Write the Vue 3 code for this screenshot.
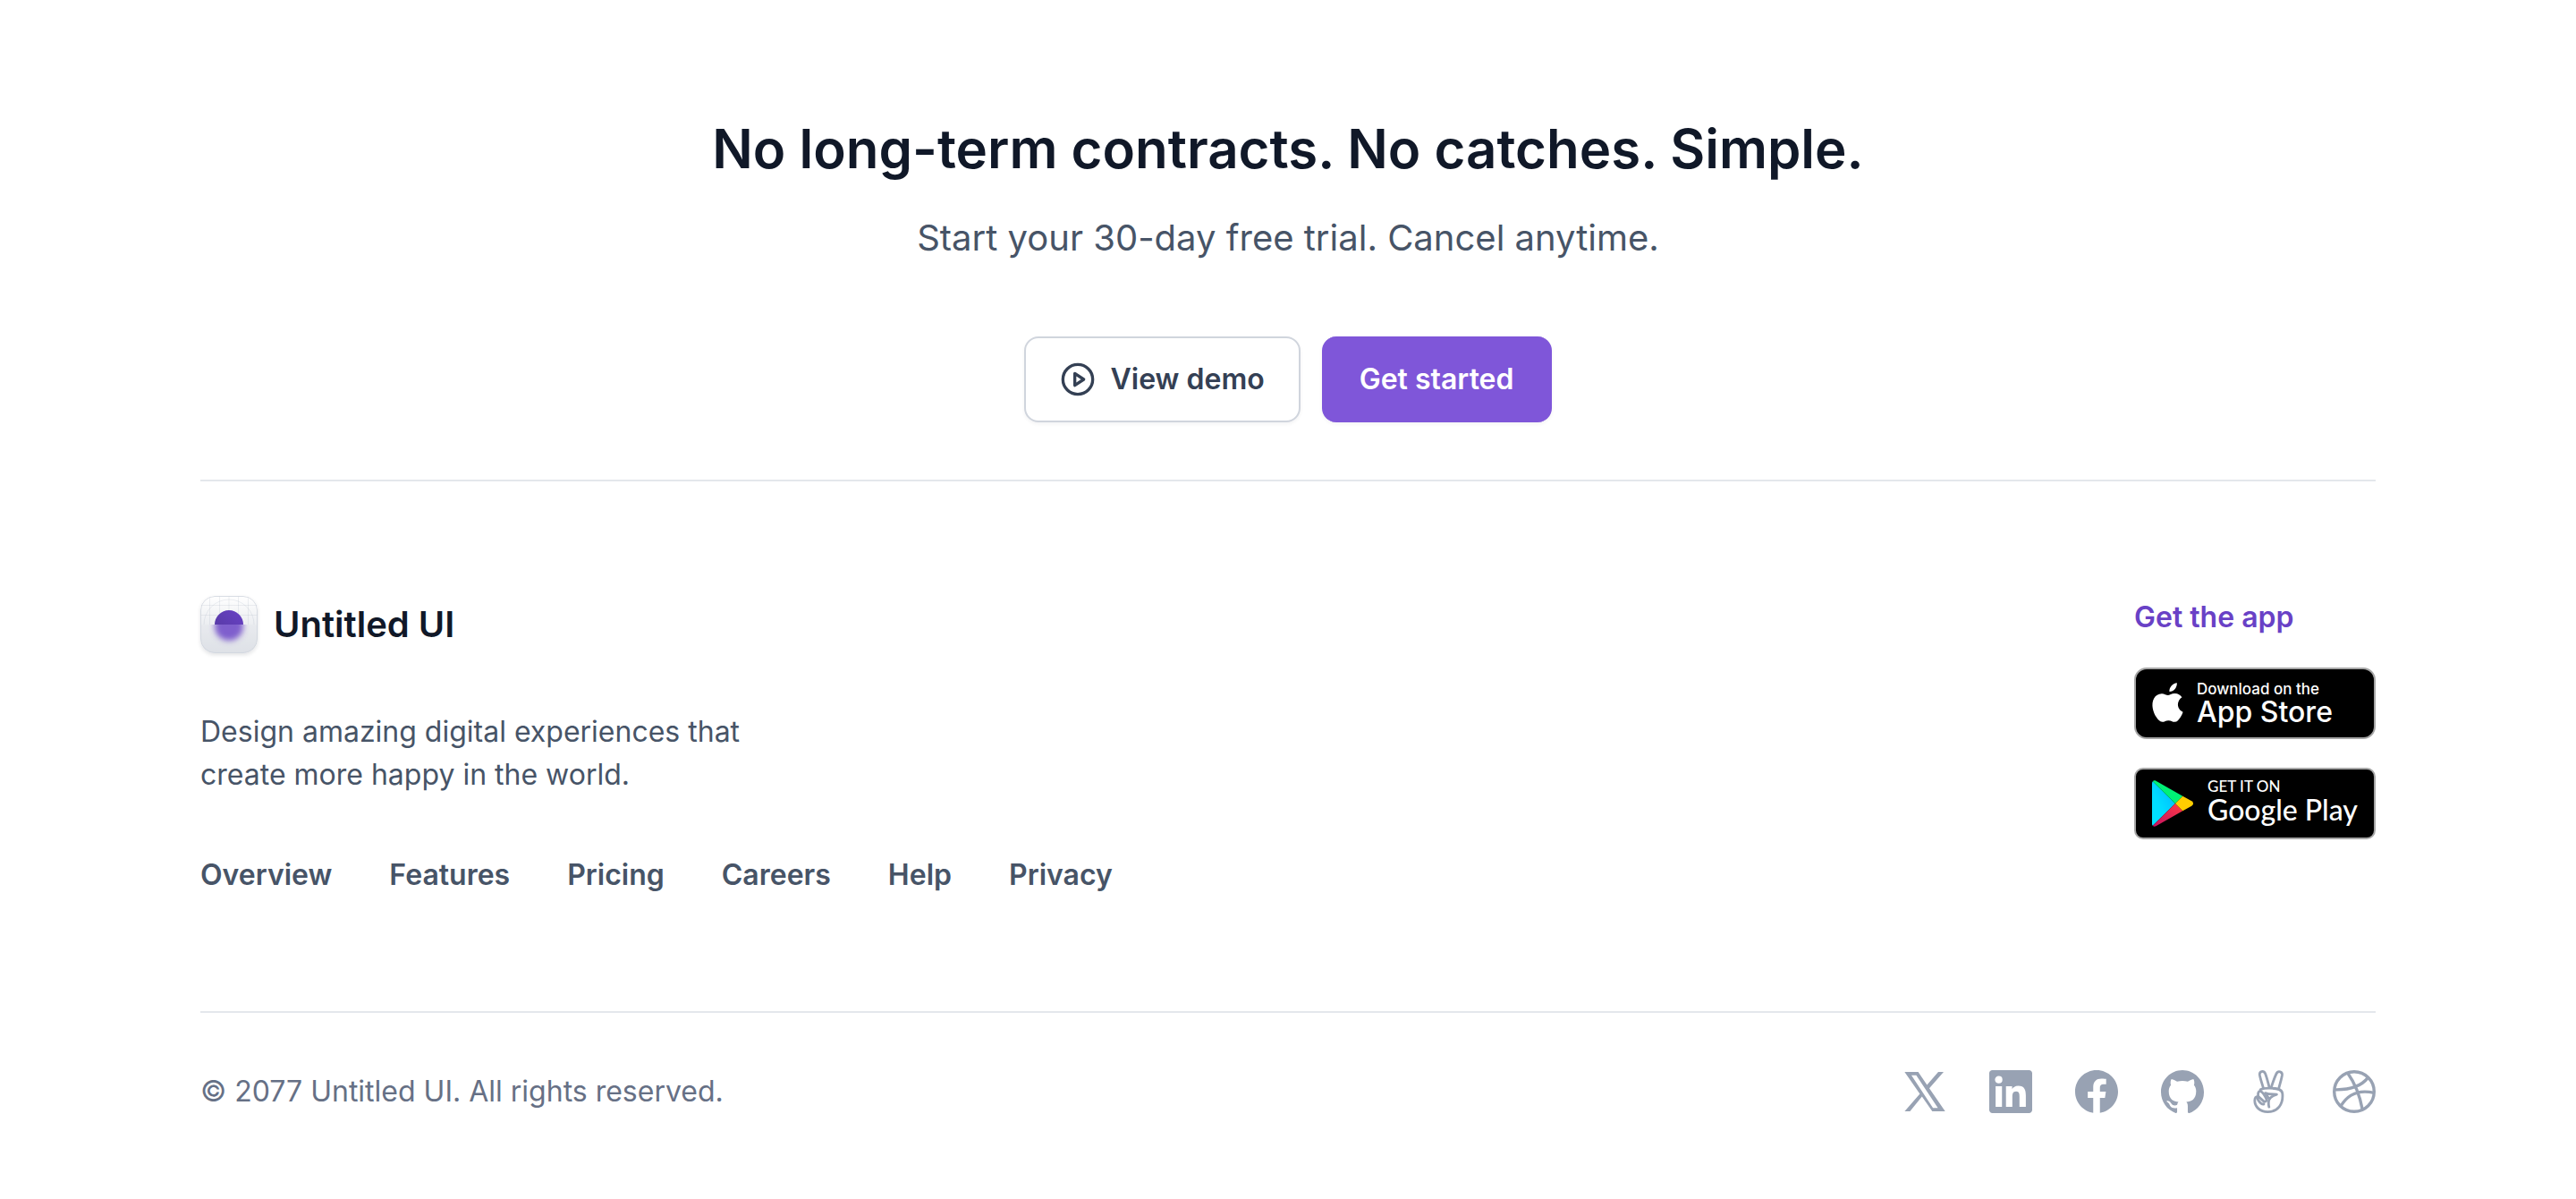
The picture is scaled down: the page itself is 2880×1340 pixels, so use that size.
<script setup>
const links = ['Overview', 'Features', 'Pricing', 'Careers', 'Help', 'Privacy']

const socials = [
  {
    name: 'X',
    path: 'M.67 1H8.3l4.900 7.300L19.500 1h3l-8 9.100L23.350 23h-7.200l-5.750-8.300L3.700 23H.700l8.500-9.800zM4.500 2.900l12.050 18.200h2.750L7.200 2.900z'
  },
  {
    name: 'LinkedIn',
    path: 'M22.223 0H1.772C.792 0 0 .773 0 1.73v20.536C0 23.222.792 24 1.772 24h20.451c.98 0 1.777-.778 1.777-1.73V1.73C24 .773 23.203 0 22.223 0zM7.12 20.452H3.558V8.995H7.12v11.457zM5.34 7.434a2.064 2.064 0 1 1 0-4.125 2.063 2.063 0 0 1 0 4.125zm15.112 13.018h-3.558v-5.57c0-1.326-.024-3.037-1.852-3.037-1.851 0-2.133 1.449-2.133 2.944v5.663H9.356V8.995h3.413v1.566h.047c.473-.9 1.636-1.852 3.365-1.852 3.605 0 4.27 2.372 4.27 5.457z'
  },
  {
    name: 'Facebook',
    path: 'M24 12c0-6.627-5.373-12-12-12S0 5.373 0 12c0 5.99 4.388 10.954 10.125 11.854v-8.385H7.078V12h3.047V9.356c0-3.007 1.792-4.668 4.533-4.668 1.312 0 2.686.234 2.686.234v2.953H15.83c-1.49 0-1.955.925-1.955 1.874V12h3.328l-.532 3.469h-2.796v8.385C19.612 22.954 24 17.99 24 12z'
  },
  {
    name: 'GitHub',
    path: 'M12 0C5.37 0 0 5.5 0 12.3c0 5.44 3.44 10.05 8.2 11.67.6.12.82-.26.82-.58v-2.3c-3.34.74-4.04-1.41-4.04-1.41-.55-1.42-1.34-1.8-1.34-1.8-1.09-.76.09-.75.09-.75 1.2.09 1.84 1.27 1.84 1.27 1.07 1.88 2.8 1.34 3.49 1.02.1-.79.42-1.33.76-1.64-2.66-.31-5.47-1.37-5.47-6.08 0-1.35.47-2.45 1.24-3.3-.13-.31-.54-1.57.11-3.26 0 0 1.01-.33 3.3 1.26a11.2 11.2 0 0 1 6 0c2.29-1.59 3.3-1.26 3.3-1.26.65 1.69.24 2.95.12 3.26.77.85 1.23 1.95 1.23 3.3 0 4.73-2.81 5.77-5.48 6.08.43.38.81 1.13.81 2.28v3.33c0 .32.22.7.83.58A12.3 12.3 0 0 0 24 12.3C24 5.5 18.63 0 12 0z'
  },
  { name: 'AngelList', kind: 'peace' },
  { name: 'Dribbble', kind: 'ball' }
]
</script>

<template>
  <div class="page">
    <section class="cta">
      <h2>No long-term contracts. No catches. Simple.</h2>
      <p>Start your 30-day free trial. Cancel anytime.</p>
      <div class="actions">
        <button type="button" class="btn secondary">
          <svg class="play" viewBox="0 0 20 20" fill="none" stroke="currentColor" stroke-width="1.67" stroke-linecap="round" stroke-linejoin="round" aria-hidden="true">
            <circle cx="10" cy="10" r="8.33" />
            <path d="M8.33 6.67 13.33 10l-5 3.33z" />
          </svg>
          View demo
        </button>
        <button type="button" class="btn primary">Get started</button>
      </div>
    </section>

    <footer class="footer">
      <div class="top">
        <div class="about">
          <a href="#" class="brand">
            <svg class="mark" viewBox="0 0 64 64" aria-hidden="true">
              <defs>
                <linearGradient id="tile" x1="0" y1="0" x2="0" y2="1">
                  <stop offset="0" stop-color="#fff" />
                  <stop offset="1" stop-color="#d8dce3" />
                </linearGradient>
                <linearGradient id="dot" x1="0" y1="1" x2="1" y2="0">
                  <stop offset="0" stop-color="#53389e" />
                  <stop offset="1" stop-color="#6941c6" />
                </linearGradient>
                <clipPath id="lower"><path d="M0 32h64v16a16 16 0 0 1-16 16H16A16 16 0 0 1 0 48z" /></clipPath>
                <clipPath id="upper"><path d="M0 0h64v32H0z" /></clipPath>
                <filter id="soft" x="-50%" y="-50%" width="200%" height="200%"><feGaussianBlur stdDeviation="3" /></filter>
              </defs>
              <rect width="64" height="64" rx="16" fill="url(#tile)" />
              <g clip-path="url(#upper)" fill="none" stroke="#98a2b3" stroke-opacity=".16">
                <path d="M10.500 2v30M21.500 0v32M32 0v32M42.500 0v32M53.500 2v30M0 10.500h64M0 21.500h64" />
                <circle cx="32" cy="32" r="28" />
              </g>
              <circle cx="32" cy="32" r="16" fill="url(#dot)" clip-path="url(#upper)" />
              <g clip-path="url(#lower)">
                <path d="M0 32h64v32H0z" fill="#e4e7ec" fill-opacity=".45" />
                <circle cx="32" cy="34" r="16" fill="#6941c6" fill-opacity=".82" filter="url(#soft)" />
              </g>
              <rect x=".5" y=".5" width="63" height="63" rx="15.500" fill="none" stroke="#d0d5dd" stroke-opacity=".8" />
            </svg>
            Untitled UI
          </a>
          <p class="tagline">Design amazing digital experiences that create more happy in the world.</p>
          <nav class="links" aria-label="Footer">
            <a v-for="link in links" :key="link" href="#">{{ link }}</a>
          </nav>
        </div>

        <div class="apps">
          <h3>Get the app</h3>
          <a href="#" class="badge apple">
            <svg class="apple-icon" viewBox="0 0 36 44" fill="#fff" aria-hidden="true">
              <path d="M29.400 23.250c.05-3.150 1.700-6.050 4.350-7.700-1.700-2.400-4.400-3.900-7.350-4-3.100-.3-6.100 1.850-7.650 1.850-1.600 0-4.050-1.800-6.650-1.750-3.450.1-6.600 2-8.250 5-3.550 6.150-.9 15.250 2.550 20.200 1.700 2.450 3.700 5.200 6.350 5.100 2.550-.1 3.500-1.650 6.600-1.650 3.050 0 3.950 1.650 6.600 1.600 2.750-.05 4.450-2.450 6.100-4.900 1.250-1.700 2.150-3.600 2.750-5.650-3.250-1.350-5.400-4.550-5.400-8.100z" />
              <path d="M24.300 8.400C25.800 6.600 26.500 4.300 26.400 2c-2.300.2-4.400 1.300-5.950 3.050-1.500 1.700-2.300 3.950-2.150 6.250 2.350 0 4.550-1.050 6-2.900z" transform="translate(2 -1.800)" />
            </svg>
            <span class="badge-text">
              <small>Download on the</small>
              <strong>App Store</strong>
            </span>
          </a>
          <a href="#" class="badge google">
            <svg class="play-icon" viewBox="0 0 46 52" aria-hidden="true">
              <defs>
                <linearGradient id="gp-blue" x1="1" y1="0" x2="0" y2="1">
                  <stop offset="0" stop-color="#00b4ff" />
                  <stop offset=".6" stop-color="#00dcff" />
                  <stop offset="1" stop-color="#00e2ff" />
                </linearGradient>
                <linearGradient id="gp-red" x1="1" y1="0" x2="0" y2="1">
                  <stop offset="0" stop-color="#ff3a44" />
                  <stop offset="1" stop-color="#c31162" />
                </linearGradient>
              </defs>
              <path d="M.8 1.200C.3 1.700 0 2.500 0 3.600v44.800c0 1.100.3 1.900.8 2.400L26 26z" fill="url(#gp-blue)" />
              <path d="M34.300 17.700 4.400.7C3 0 1.700 0 .8 1.200L26 26z" fill="#00f076" />
              <path d="M34.300 34.300 4.400 51.300C3 52 1.700 52 .8 50.800L26 26z" fill="url(#gp-red)" />
              <path d="M44.300 23.300 34.300 17.700 26 26l8.300 8.300 10-5.600c2.300-1.500 2.300-3.900 0-5.400z" fill="#ffcd00" />
            </svg>
            <span class="badge-text">
              <small>GET IT ON</small>
              <strong>Google Play</strong>
            </span>
          </a>
        </div>
      </div>

      <div class="bottom">
        <p>© 2077 Untitled UI. All rights reserved.</p>
        <div class="socials">
          <a v-for="s in socials" :key="s.name" href="#" :aria-label="s.name">
            <svg v-if="s.path" viewBox="0 0 24 24" fill="currentColor" fill-rule="evenodd" aria-hidden="true">
              <path :d="s.path" />
            </svg>
            <svg v-else-if="s.kind === 'peace'" viewBox="0 0 24 24" fill="none" stroke="currentColor" stroke-width="1.400" stroke-linejoin="round" stroke-linecap="round" aria-hidden="true">
              <path d="M9.300 10.200C8.500 7.500 7.600 5 7.200 2.700 6.900.5 9.400 0 10.300 1.900c.9 2.300 1.600 5.300 2.300 7.800" />
              <path d="M13.600 9.700c.9-2.800 1.800-5.500 2.900-7.700.9-1.900 3.500-1.300 3.200.9-.4 2.500-1.300 5-1.900 7.500" />
              <path d="M7.600 10.900c1.300-.7 3-.9 5.400-.8 3.200 0 6.600.2 6.900 2.900.6 6-2.600 10.300-8.300 10.300-4.300 0-7.200-2.900-7.200-6.300 0-1.500.7-2.400 1.900-2.300" />
              <path d="M6.500 14.800c-.6-1.500-.1-3 1-3.100 1.400.3 2.600 2.700 3.500 4.500.3 1.200-1 1.800-1.800 1L6.500 14.800c-.8.500-.7 1.300 0 2.200.8 1.200 1.800 2.200 3 2" />
              <path d="M10.300 12.800c2.200.9 4.300.6 6.400.8-2 .6-3.700 1.500-4.300 3-.4 1.300-.3 2.700 0 4M10.300 12.800l2.100 3.200" />
            </svg>
            <svg v-else viewBox="0 0 24 24" fill="none" stroke="currentColor" stroke-width="1.700" aria-hidden="true">
              <circle cx="12" cy="12" r="11.150" />
              <path d="M8.300 1.500c3.700 5.200 6.700 11.700 8.300 20.500M1 10.900c7.800.2 14.500-1.300 18.700-6.700M4.500 20.100c4-6.700 10.500-9.300 18.600-7.400" />
            </svg>
          </a>
        </div>
      </div>
    </footer>
  </div>
</template>

<style>
body {
  background: #fff;
}
</style>

<style scoped>
.page {
  box-sizing: border-box;
  padding: 128px 224px 96px;
  font-family: Inter, "Liberation Sans", sans-serif;
  font-size: 32px;
  line-height: 48px;
  color: #475467;
}

h2,
h3,
p {
  margin: 0;
}

a {
  color: inherit;
  text-decoration: none;
}

svg {
  display: block;
  flex: none;
}

.cta {
  display: flex;
  flex-direction: column;
  align-items: center;
  padding-bottom: 64px;
  text-align: center;
}

h2 {
  font-size: 60px;
  line-height: 76px;
  font-weight: 600;
  color: #101828;
}

.cta p {
  margin-top: 32px;
  font-size: 40px;
  line-height: 60px;
}

.actions {
  display: flex;
  gap: 24px;
  margin-top: 80px;
}

.btn {
  display: flex;
  align-items: center;
  gap: 16px;
  padding: 22px 38px;
  border: 2px solid;
  border-radius: 16px;
  font: 600 32px/48px Inter, "Liberation Sans", sans-serif;
  box-shadow: 0 2px 4px rgba(16, 24, 40, 0.05);
  cursor: pointer;
}

.secondary {
  border-color: #d0d5dd;
  background: #fff;
  color: #344054;
}

.primary {
  padding: 24px 40px;
  border-width: 0 2px;
  border-color: #7f56d9;
  background: #7f56d9;
  color: #fff;
}

.play {
  width: 40px;
  height: 40px;
}

.top {
  display: flex;
  justify-content: space-between;
  padding: 128px 0;
  border-top: 2px solid #e4e7ec;
}

.brand {
  display: flex;
  align-items: center;
  gap: 18px;
  width: max-content;
  font-size: 40px;
  line-height: 64px;
  font-weight: 600;
  color: #101828;
}

.mark {
  width: 64px;
  height: 64px;
  border-radius: 16px;
  box-shadow: 0 2px 4px rgba(16, 24, 40, 0.12);
}

.tagline {
  max-width: 640px;
  margin-top: 64px;
}

.links {
  display: flex;
  gap: 64px;
  margin-top: 64px;
  font-weight: 600;
}

.apps {
  display: flex;
  flex-direction: column;
  gap: 32px;
}

h3 {
  font-size: 32px;
  line-height: 48px;
  font-weight: 600;
  color: #6941c6;
}

.badge {
  display: flex;
  align-items: center;
  box-sizing: border-box;
  width: 270px;
  height: 80px;
  border: 2px solid #a6a6a6;
  border-radius: 14px;
  background: #000;
  color: #fff;
}

.badge-text {
  display: flex;
  flex-direction: column;
}

.badge small {
  font-size: 17px;
  line-height: 20px;
  font-weight: 500;
}

.badge strong {
  font-size: 32px;
  line-height: 32px;
  font-weight: 500;
}

.apple {
  gap: 14px;
  padding-left: 16px;
}

.google {
  gap: 16px;
  padding-left: 18px;
  border-radius: 10px;
  font-family: Lato, sans-serif;
}

.google .badge-text {
  padding-bottom: 6px;
}

.apple-icon {
  width: 38px;
  height: 46px;
}

.play-icon {
  width: 46px;
  height: 52px;
}

.bottom {
  display: flex;
  justify-content: space-between;
  align-items: center;
  padding-top: 64px;
  border-top: 2px solid #e4e7ec;
  color: #667085;
}

.socials {
  display: flex;
  gap: 48px;
  color: #98a2b3;
}

.socials svg {
  width: 48px;
  height: 48px;
}
</style>
